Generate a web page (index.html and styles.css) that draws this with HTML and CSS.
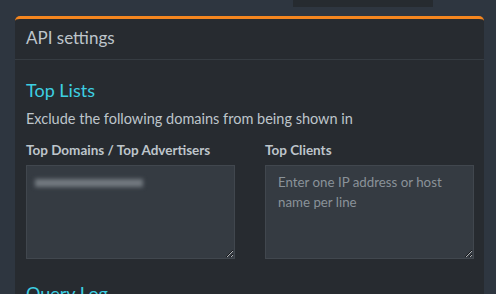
FILE: index.html
```html
<!DOCTYPE html>
<html lang="en">
<head>
  <meta charset="UTF-8">
  <meta name="viewport" content="width=device-width, initial-scale=1.0">
  <title>API settings</title>
  <link rel="stylesheet" href="styles.css">
</head>
<body>
  <!-- Resto do painel acima -->
  <div class="top-strip">
    <div class="top-block"></div>
  </div>

  <!-- Caixa: API settings -->
  <div class="box box-warning">
    <div class="box-header">
      <h3 class="box-title">API settings</h3>
    </div>
    <div class="box-body">
      <h4>Top Lists</h4>
      <p>Exclude the following domains from being shown in</p>
      <div class="row">
        <div class="col">
          <label for="domains">Top Domains / Top Advertisers</label>
          <div class="blurred-wrap">
            <textarea id="domains" class="form-control"></textarea>
            <span class="blurred"></span>
          </div>
        </div>
        <div class="col">
          <label for="clients">Top Clients</label>
          <textarea id="clients" class="form-control" placeholder="Enter one IP address or host name per line"></textarea>
        </div>
      </div>
      <h4>Query Log</h4>
    </div>
  </div>
</body>
</html>
```

FILE: styles.css
```css
body {
  margin: 0;
  background: #2e3640;
  font-family: 'Lato', 'Noto Sans', sans-serif;
  color: #bec5cb;
  font-size: 14.5px;
  overflow: hidden;
}
.top-strip {
  height: 16px;
}
.top-block {
  margin-left: 293px;
  width: 140px;
  height: 7px;
  background: #262b30;
}
/* Caixa principal */
.box {
  margin: 0 12px 0 15px;
  background: #272b30;
  border-top: 3px solid #f5861f;
  border-radius: 5px 5px 0 0;
}
.box-header {
  box-sizing: border-box;
  padding: 0 11px 3px 11px;
  height: 41px;
  display: flex;
  align-items: center;
  border-bottom: 1px solid #363c42;
}
.box-title {
  margin: 0;
  font-size: 17px;
  font-weight: normal;
  color: #bec5cb;
}
.box-body {
  padding: 19px 11px 0 11px;
}
h4 {
  margin: 0 0 9px 0;
  font-size: 18px;
  font-weight: normal;
  color: #3dcfe2;
}
p {
  margin: 0 0 15px 0;
}
.row {
  display: flex;
  gap: 30px;
  margin-bottom: 23px;
}
.col {
  width: 209px;
}
label {
  display: block;
  font-size: 13.5px;
  font-weight: bold;
  margin-bottom: 7px;
}
.form-control {
  box-sizing: border-box;
  display: block;
  width: 209px;
  height: 94px;
  margin: 0;
  padding: 6px 12px;
  background: #353b42;
  border: 1px solid #41474e;
  color: #bec5cb;
  font-family: inherit;
  font-size: 13.3px;
  line-height: 20px;
  resize: vertical;
}
.form-control::placeholder {
  color: #8a9299;
}
.blurred-wrap {
  position: relative;
}
.blurred {
  position: absolute;
  left: 9px;
  top: 14px;
  width: 108px;
  height: 8px;
  background: #737a80;
  filter: blur(2px);
}
```
